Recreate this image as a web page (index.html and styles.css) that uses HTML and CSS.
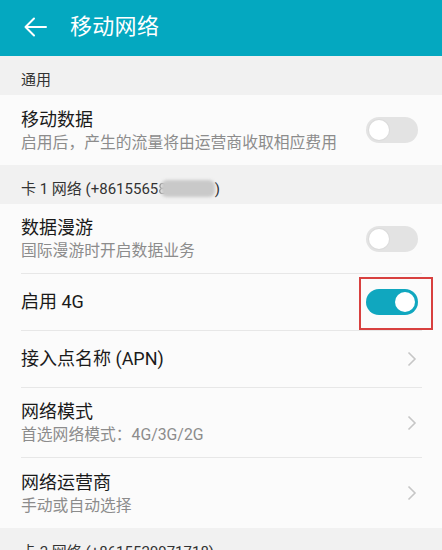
FILE: index.html
```html
<!DOCTYPE html>
<html lang="zh-CN">
<head>
<meta charset="utf-8">
<title>移动网络</title>
<link rel="stylesheet" href="styles.css">
</head>
<body>
<div class="screen">
  <header class="appbar">
    <svg class="back" width="24" height="20" viewBox="0 0 24 20"><path d="M23 10H2.5M11 1.5L2.5 10L11 18.5" fill="none" stroke="#fff" stroke-width="2" stroke-linecap="round" stroke-linejoin="round"/></svg>
    <span class="title">移动网络</span>
  </header>

  <div class="section">通用</div>
  <div class="group">
    <div class="row two">
      <div class="text"><div class="t">移动数据</div><div class="s">启用后，产生的流量将由运营商收取相应费用</div></div>
      <span class="toggle"></span>
    </div>
  </div>

  <div class="section">卡 1 网络 (+8615565<span class="hidden-digit">8</span><span class="blur"></span>)</div>
  <div class="group">
    <div class="row two">
      <div class="text"><div class="t">数据漫游</div><div class="s">国际漫游时开启数据业务</div></div>
      <span class="toggle"></span>
    </div>
    <div class="row one">
      <div class="text"><div class="t">启用 4G</div></div>
      <span class="toggle on"><span class="mark"></span></span>
    </div>
    <div class="row one apn">
      <div class="text"><div class="t">接入点名称 (APN)</div></div>
      <svg class="chev" width="10" height="16" viewBox="0 0 10 16"><path d="M1.5 1.5L8 8L1.5 14.5" fill="none" stroke="#c6c6c6" stroke-width="1.6"/></svg>
    </div>
    <div class="row two">
      <div class="text"><div class="t">网络模式</div><div class="s">首选网络模式：4G/3G/2G</div></div>
      <svg class="chev" width="10" height="16" viewBox="0 0 10 16"><path d="M1.5 1.5L8 8L1.5 14.5" fill="none" stroke="#c6c6c6" stroke-width="1.6"/></svg>
    </div>
    <div class="row two">
      <div class="text"><div class="t">网络运营商</div><div class="s">手动或自动选择</div></div>
      <svg class="chev" width="10" height="16" viewBox="0 0 10 16"><path d="M1.5 1.5L8 8L1.5 14.5" fill="none" stroke="#c6c6c6" stroke-width="1.6"/></svg>
    </div>
  </div>

  <div class="section">卡 2 网络 (+8615520971718)</div>
</div>
</body>
</html>
```

FILE: styles.css
```css
* { box-sizing: border-box; }
html, body { margin: 0; padding: 0; }
body {
  width: 442px;
  height: 550px;
  overflow: hidden;
  background: #f1f1f1;
  font-family: Roboto, "Noto Sans CJK SC", sans-serif;
}
.screen { display: flex; flex-direction: column; }

.appbar {
  height: 56px;
  background: #04a8c0;
  display: flex;
  align-items: center;
  padding-left: 23px;
}
.back { display: block; margin-top: -2px; }
.title {
  color: #fff;
  font-size: 22px;
  margin-left: 23px;
  line-height: 30px;
  margin-top: -2px;
  letter-spacing: 0.3px;
}

.section {
  height: 39px;
  padding: 14px 0 0 21px;
  font-size: 15px;
  line-height: 20px;
  color: #333;
  background: #f1f1f1;
  white-space: nowrap;
}
.hidden-digit { opacity: 0.55; }
.blur {
  display: inline-block;
  width: 54px;
  height: 17px;
  margin-left: -6px;
  vertical-align: -3px;
  background: #c9c9c9;
  border-radius: 6px;
  filter: blur(1.5px);
}

.group { background: #fbfbfb; }

.row {
  margin: 0 20px 0 21px;
  display: flex;
  align-items: center;
  justify-content: space-between;
  padding-right: 4px;
  border-bottom: 1px solid #e7e7e7;
}
.row:last-child { border-bottom: none; }
.row.two { height: 70px; }
.row.one { height: 57px; }

.text { display: flex; flex-direction: column; gap: 1px; }
.t { font-size: 18px; line-height: 24px; color: #1a1a1a; }
.s { font-size: 15.8px; line-height: 20px; color: #8c8c8c; }

.toggle {
  position: relative;
  width: 52px;
  height: 26px;
  border-radius: 13px;
  background: #e3e3e3;
  flex: none;
}
.toggle::after {
  content: "";
  position: absolute;
  top: 3px;
  left: 3px;
  width: 20px;
  height: 20px;
  border-radius: 50%;
  background: #fff;
  box-shadow: 0 0 0 1px #dcdcdc;
}
.toggle.on { background: #10a7bf; }
.toggle.on::after { left: 29px; box-shadow: none; }

.mark {
  position: absolute;
  left: -7px;
  top: -12px;
  width: 74px;
  height: 53px;
  border: 2.5px solid #d8403f;
}

.chev { display: block; margin-right: 1px; }
```
